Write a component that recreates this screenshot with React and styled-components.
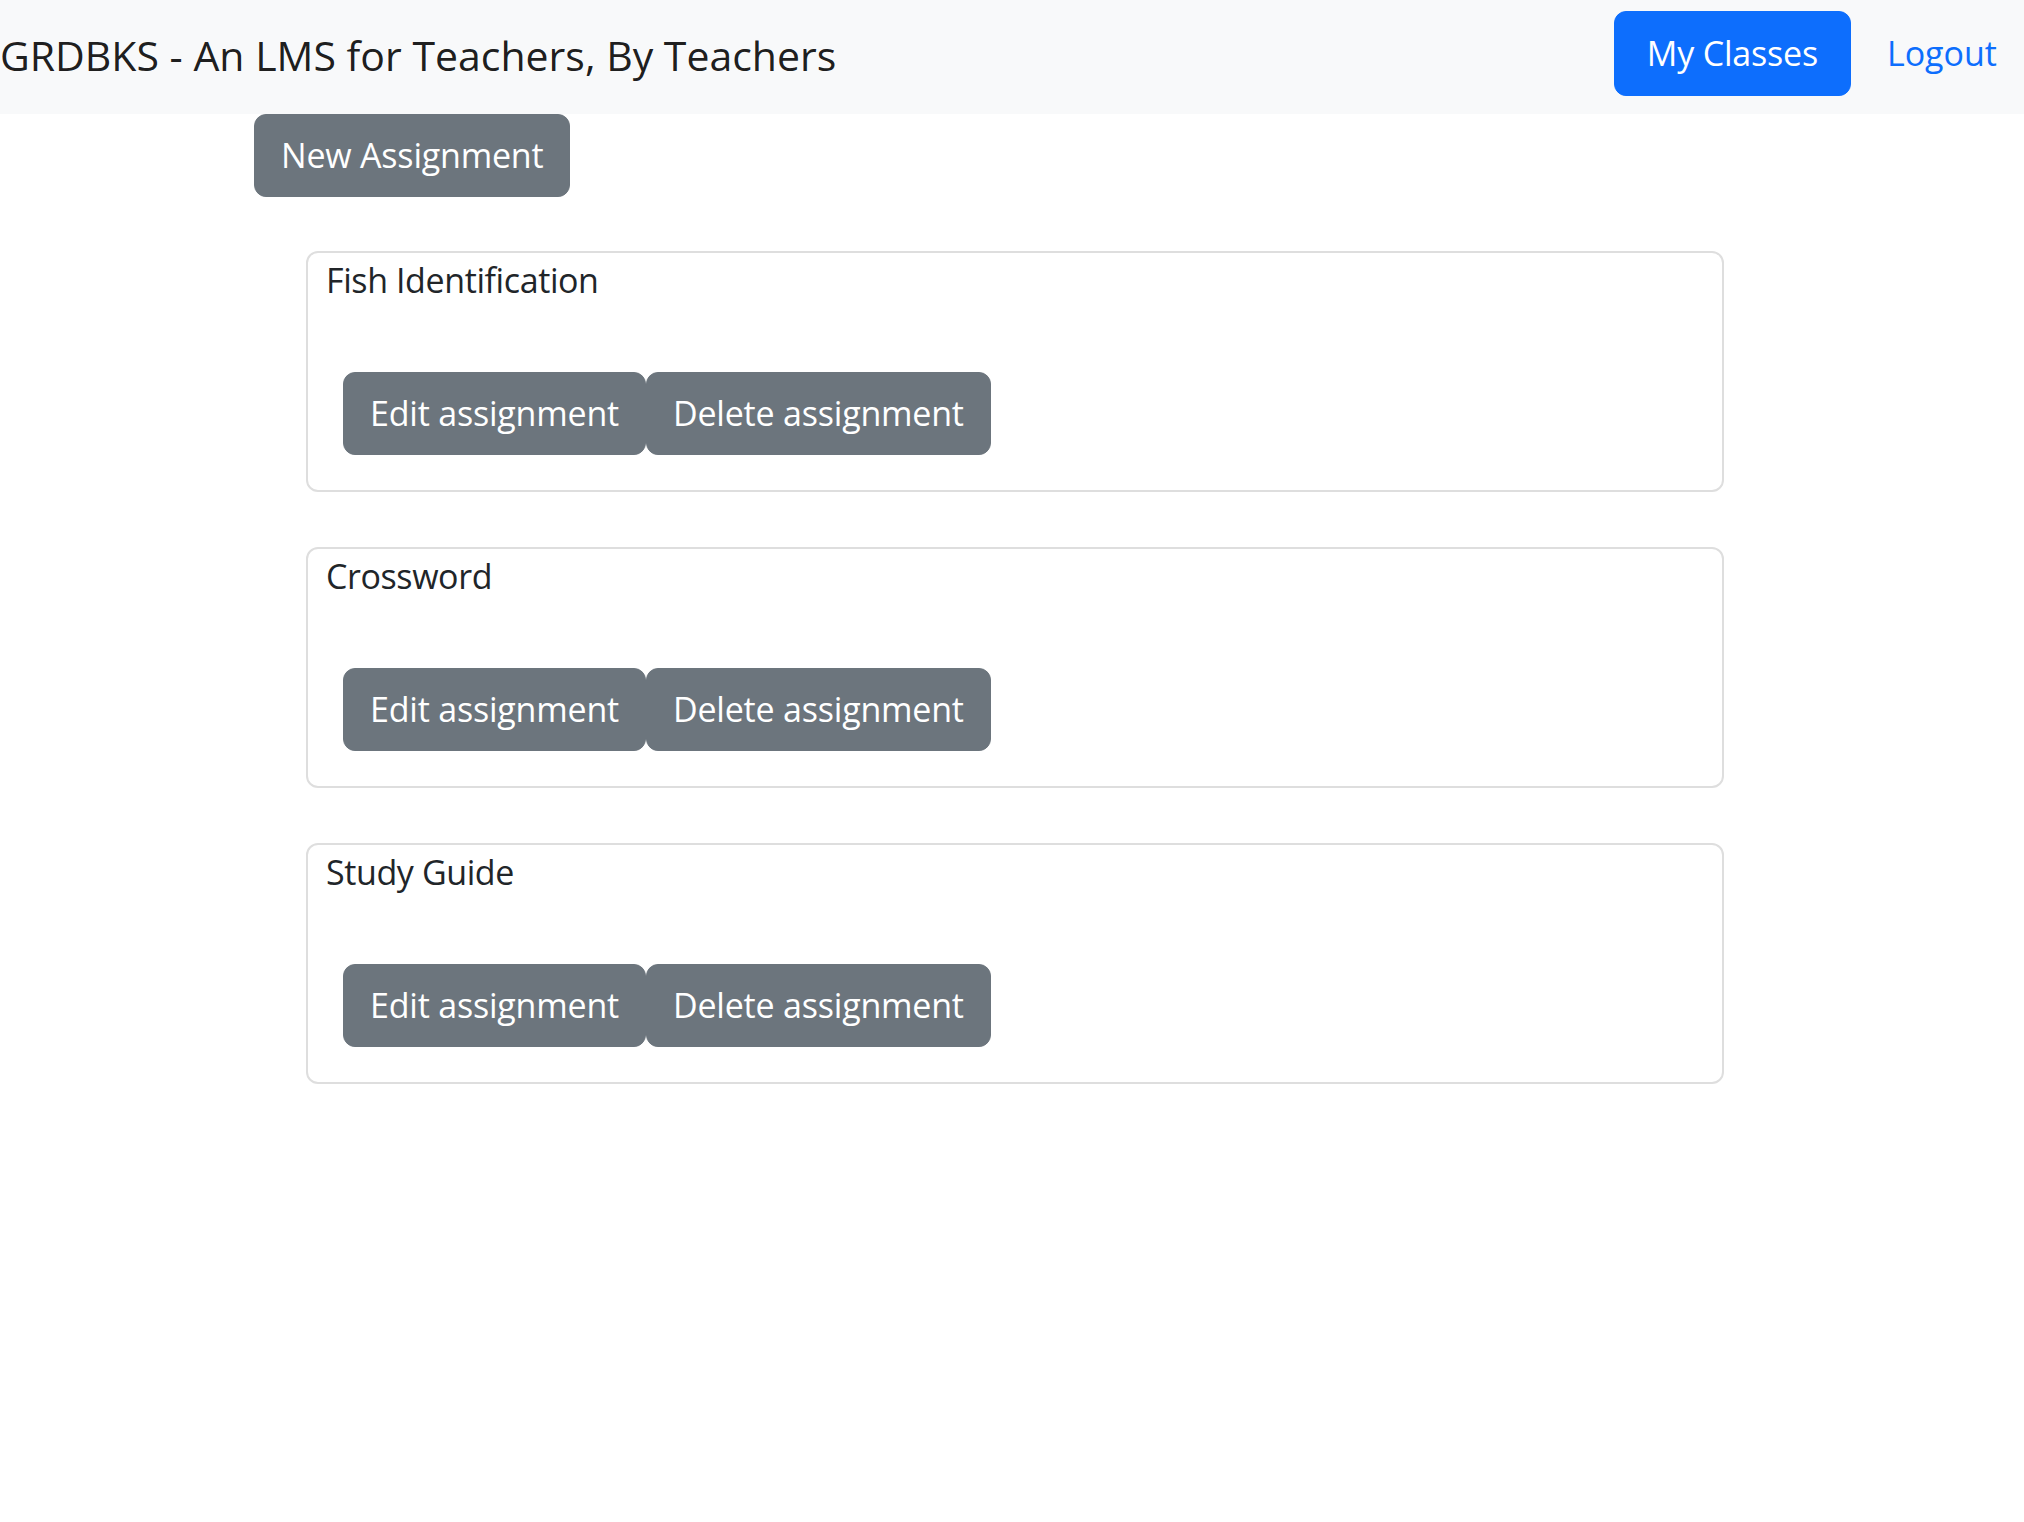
import React from 'react';
import styled, { createGlobalStyle } from 'styled-components';

const COLORS = {
  navBg: '#f8f9fa',
  text: '#212529',
  primary: '#0d6efd',
  secondary: '#6c757d',
  border: '#dedede',
};

const assignments = ['Fish Identification', 'Crossword', 'Study Guide'];

function App() {
  return (
    <>
      <GlobalStyle />
      <Header>
        <Brand>GRDBKS - An LMS for Teachers, By Teachers</Brand>
        <NavActions>
          <Button variant="primary">My Classes</Button>
          <NavLink href="#">Logout</NavLink>
        </NavActions>
      </Header>

      <Main>
        <NewButtonWrapper>
          <Button>New Assignment</Button>
        </NewButtonWrapper>

        <CardList>
          {assignments.map((name) => (
            <Card key={name}>
              <CardTitle>{name}</CardTitle>
              <ButtonRow>
                <Button>Edit assignment</Button>
                <Button>Delete assignment</Button>
              </ButtonRow>
            </Card>
          ))}
        </CardList>
      </Main>
    </>
  );
}

const GlobalStyle = createGlobalStyle`
  * {
    box-sizing: border-box;
  }

  body {
    margin: 0;
    background: #fff;
    color: ${COLORS.text};
    font-family: 'Open Sans', 'Noto Sans', sans-serif;
  }
`;

const Header = styled.header`
  height: 114px;
  display: flex;
  align-items: center;
  justify-content: space-between;
  padding-right: 27px;
  background: ${COLORS.navBg};
`;

const Brand = styled.span`
  font-size: 41px;
  line-height: 1.5;
  color: rgba(0, 0, 0, 0.9);
  margin-bottom: 3px;
`;

const NavActions = styled.nav`
  display: flex;
  align-items: center;
  gap: 36px;
  margin-bottom: 7px;
`;

const NavLink = styled.a`
  font-size: 34px;
  line-height: 1.5;
  color: ${COLORS.primary};
  text-decoration: none;
`;

const Button = styled.button`
  font-family: inherit;
  font-size: 34px;
  line-height: 1.5;
  padding: ${(p) => (p.variant === 'primary' ? '16px 32px' : '15px 26px')};
  border: 1px solid;
  border-color: ${(p) => (p.variant === 'primary' ? COLORS.primary : COLORS.secondary)};
  border-radius: 12px;
  color: #fff;
  background: ${(p) => (p.variant === 'primary' ? COLORS.primary : COLORS.secondary)};
  cursor: pointer;
  letter-spacing: -0.2px;
`;

const Main = styled.main`
  display: flex;
  flex-direction: column;
`;

const NewButtonWrapper = styled.div`
  padding-left: 254px;
`;

const CardList = styled.div`
  display: flex;
  flex-direction: column;
  gap: 55px;
  width: 1418px;
  margin-left: 306px;
  margin-top: 54px;
`;

const Card = styled.section`
  border: 2px solid ${COLORS.border};
  border-radius: 12px;
  padding: 2px 20px 35px 18px;
`;

const CardTitle = styled.h2`
  margin: 0;
  font-size: 34px;
  font-weight: 400;
  line-height: 1.5;
  letter-spacing: -0.4px;
`;

const ButtonRow = styled.div`
  display: flex;
  margin-top: 66px;
  margin-left: 17px;
`;

export default App;
